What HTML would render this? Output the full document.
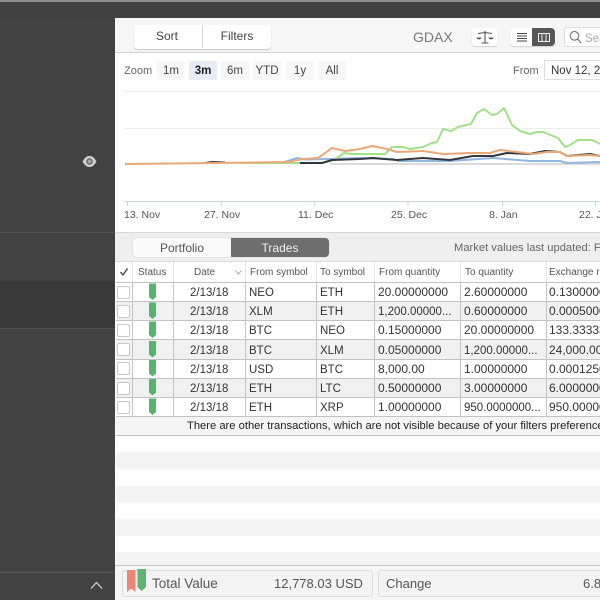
<!DOCTYPE html>
<html><head><meta charset="utf-8">
<style>
html,body{margin:0;padding:0;width:600px;height:600px;overflow:hidden;background:#424242;font-family:"Liberation Sans",sans-serif;color:#333}
div,span{position:absolute;box-sizing:border-box;white-space:nowrap}
#w{left:0;top:0;width:600px;height:600px;overflow:hidden;filter:blur(.3px)}
.t{font-size:11px;line-height:14px;color:#444}
.z{top:61px;height:19px;background:#f7f7f7;font-size:11.5px;line-height:20px;text-align:center;color:#444;border-radius:2px}
.h{top:263px;height:20px;font-size:10px;line-height:20px;color:#555}
.c{font-size:11.5px;line-height:19px;color:#333;margin-top:2px}
.n{font-size:12px;margin-top:1px}
.v{width:1px;background:#c4c4c4}
.hv{top:262px;height:20px;width:1px;background:#e6e6e6}
.r{left:116px;width:484px;height:1px;background:#c2c2c2}
.g{left:116px;width:484px;height:19px;background:#f1f1f1}
.cb{left:117px;width:13px;height:13px;background:#fff;border:1px solid #c8c8c8;border-radius:2px}
.s{stroke-linejoin:round;fill:none}
</style></head><body>
<div id="w">
<div style="left:0;top:0;width:600px;height:2px;background:#8f8f8f"></div>
<div style="left:0;top:2px;width:600px;height:16px;background:#414141"></div>
<div style="left:0;top:232px;width:115px;height:1px;background:#525252"></div>
<div style="left:0;top:281px;width:115px;height:47px;background:#383838"></div>
<div style="left:0;top:328px;width:115px;height:1px;background:#515151"></div>
<div style="left:0;top:572px;width:115px;height:1px;background:#565656"></div>
<svg style="position:absolute;left:82px;top:155px" width="15" height="13" viewBox="0 0 15 13"><path d="M0.500 6.500C3 2.200 5 1 7.500 1S12 2.200 14.500 6.500C12 10.800 10 12 7.500 12S3 10.800 .5 6.500Z" fill="#cfcfcf"/><circle cx="7.500" cy="6.500" r="3.200" fill="#5a5a5a"/><circle cx="7.500" cy="6.500" r="2" fill="#a8a8a8"/></svg>
<svg style="position:absolute;left:90px;top:581px" width="13" height="9" viewBox="0 0 13 9"><path d="M1 7.500L6.500 1.500L12 7.500" fill="none" stroke="#d8d8d8" stroke-width="1.200"/></svg>

<div style="left:115px;top:18px;width:485px;height:582px;background:#fff"></div>
<div style="left:115px;top:18px;width:485px;height:34px;background:#f6f6f6"></div>
<div style="left:115px;top:52px;width:485px;height:1px;background:#d4d4d4"></div>
<div style="left:134px;top:25px;width:137px;height:24px;background:#fff;border-radius:4px;box-shadow:0 1px 1px #c4c4c4"></div>
<div style="left:202px;top:25px;width:1px;height:23px;background:#d6d6d6"></div>
<div style="left:133px;top:26px;width:68px;height:23px;text-align:center;font-size:12px;line-height:21px;color:#444">Sort</div>
<div style="left:203px;top:26px;width:68px;height:23px;text-align:center;font-size:12px;line-height:21px;color:#444">Filters</div>
<div style="left:413px;top:29px;font-size:14px;line-height:17px;color:#777">GDAX</div>
<div style="left:472px;top:28px;width:26px;height:18px;background:#fff;border-radius:3px;box-shadow:0 1px 1px #d0d0d0"></div>
<svg style="position:absolute;left:476px;top:30px" width="18" height="15" viewBox="0 0 18 15"><path d="M9 1V12.500M5.500 13H12.500M2 3.500L9 2.500L16 3.500" fill="none" stroke="#555" stroke-width="1.100"/><path d="M.5 7.500H5.500C5 10 1 10 .5 7.500ZM12.500 7.500H17.500C17 10 13 10 12.500 7.500Z" fill="#555"/></svg>
<div style="left:510px;top:28px;width:46px;height:18px;background:#fff;border-radius:4px;box-shadow:0 1px 1px #d0d0d0"></div>
<div style="left:532px;top:28px;width:23px;height:18px;background:#575757;border-radius:0 4px 4px 0"></div>
<svg style="position:absolute;left:510px;top:28px" width="46" height="18" viewBox="0 0 46 18"><path d="M7 5.500H17M7 8H17M7 10.500H17M7 13H17" stroke="#444" stroke-width="1"/><path d="M28.500 5.500H39.500V13.500H28.500ZM32 5.500V13.500M36 5.500V13.500" fill="none" stroke="#eee" stroke-width="1"/></svg>
<div style="left:564px;top:27px;width:40px;height:20px;background:#fff;border:1px solid #ddd;border-radius:3px"></div>
<svg style="position:absolute;left:569px;top:30px" width="13" height="14" viewBox="0 0 13 14"><circle cx="5.500" cy="5.800" r="4.300" fill="none" stroke="#666" stroke-width="1"/><path d="M8.500 9L12 13" stroke="#666" stroke-width="1.100"/></svg>
<div style="left:585px;top:32px;font-size:11.500px;line-height:14px;color:#aaa">Sea</div>

<div class="t" style="left:124px;top:64px;color:#666">Zoom</div>
<div class="z" style="left:157px;width:28px">1m</div>
<div class="z" style="left:189px;width:28px;background:#e6ebf5;font-weight:bold;color:#222">3m</div>
<div class="z" style="left:221px;width:28px">6m</div>
<div class="z" style="left:253px;width:28px">YTD</div>
<div class="z" style="left:286px;width:28px">1y</div>
<div class="z" style="left:318px;width:28px">All</div>
<div class="t" style="left:513px;top:64px;color:#666">From</div>
<div style="left:544px;top:60px;width:60px;height:20px;border:1px solid #ddd;background:#fff;font-size:11.500px;line-height:20px;padding-left:6px;color:#333">Nov 12, 2</div>

<svg style="position:absolute;left:115px;top:85px" width="485" height="130" viewBox="115 85 485 130">
<path d="M124 91.500H600M124 128.500H600" stroke="#ececec" stroke-width="1"/>
<path d="M124 201.500H600" stroke="#cdd3e0" stroke-width="1"/>
<path d="M127.500 201.500V206M221.500 201.500V206M314.500 201.500V206M408 201.500V206M502.500 201.500V206M595.500 201.500V206" stroke="#cdd3e0" stroke-width="1"/>
<path d="M330 164H600" stroke="#cfcfcf" stroke-width="1.500" fill="none"/>
<path class="s" stroke="#90b7e2" stroke-width="2" d="M280 163L288 161L297 158L306 159.500L328 159L360 158L393 159L398 161L450 161L493 158L530 161L560 161L567 163L600 162"/>
<path class="s" stroke="#a4e08a" stroke-width="2" d="M240 163L310 163L322 163L334 160L344 153L352 154L360 154L385 154L392 147L403 147L410 149L423 147L432 143L437 142L443 129L451 131L458 127L471 124L477 113L484 109L492 115L497 114L504 108L512 125L520 131L530 134L537 132L543 132L553 136L558 138L565 147L570 145L578 140L592 140L600 144"/>
<path class="s" stroke="#33363f" stroke-width="2" d="M205 163L212 162L225 162.500M300 163L322 163L332 160L360 159L373 158L397 160L423 158L450 160L473 156L493 156L507 153L530 154L545 151L560 152L567 156L590 154L600 156"/>
<path class="s" stroke="#eba877" stroke-width="2" d="M125 164L215 163L288 162L302 159L318 158L332 148L345 151L360 149L372 146L387 149L397 152L423 151L443 154L470 153L490 153L500 150L517 152L533 154L547 152L560 152L567 156L590 155L600 156"/>
</svg>
<div class="t" style="left:124px;top:208px;font-size:10.500px;color:#555">13. Nov</div>
<div class="t" style="left:204px;top:208px;font-size:10.500px;color:#555">27. Nov</div>
<div class="t" style="left:298px;top:208px;font-size:10.500px;color:#555">11. Dec</div>
<div class="t" style="left:391px;top:208px;font-size:10.500px;color:#555">25. Dec</div>
<div class="t" style="left:489px;top:208px;font-size:10.500px;color:#555">8. Jan</div>
<div class="t" style="left:579px;top:208px;font-size:10.500px;color:#555">22. J</div>

<div style="left:115px;top:232px;width:485px;height:30px;background:#efefef;border-top:1px solid #d8d8d8;border-bottom:1px solid #dcdcdc"></div>
<div style="left:133px;top:238px;width:196px;height:19px;background:#fafafa;border-radius:4px;box-shadow:0 0 1px #aaa"></div>
<div style="left:231px;top:238px;width:98px;height:19px;background:#6e6e6e;border-radius:0 4px 4px 0"></div>
<div style="left:133px;top:239px;width:98px;height:18px;text-align:center;font-size:12px;line-height:18px;color:#555">Portfolio</div>
<div style="left:231px;top:239px;width:98px;height:18px;text-align:center;font-size:12px;line-height:18px;color:#eee">Trades</div>
<div style="left:454px;top:241px;font-size:11.200px;line-height:15px;color:#666">Market values last updated: F</div>

<div style="left:116px;top:262px;width:484px;height:20px;background:#fff"></div>
<div class="hv" style="left:132px"></div><div class="hv" style="left:173px"></div><div class="hv" style="left:245px"></div><div class="hv" style="left:316px"></div><div class="hv" style="left:374px"></div><div class="hv" style="left:460px"></div><div class="hv" style="left:546px"></div>
<svg style="position:absolute;left:119px;top:267px" width="10" height="10" viewBox="0 0 10 10"><path d="M1.500 5L4 8L8.500 1.500" fill="none" stroke="#333" stroke-width="1.200"/></svg>
<div class="h" style="left:138px">Status</div>
<div class="h" style="left:194px">Date</div>
<svg style="position:absolute;left:235px;top:270px" width="7" height="5" viewBox="0 0 7 5"><path d="M.5 .5L3.500 4L6.500 .5" fill="none" stroke="#999" stroke-width=".8"/></svg>
<div class="h" style="left:250px">From symbol</div>
<div class="h" style="left:320px">To symbol</div>
<div class="h" style="left:379px">From quantity</div>
<div class="h" style="left:465px">To quantity</div>
<div class="h" style="left:549px">Exchange r</div>

<div class="g" style="top:301px"></div><div class="g" style="top:340px"></div><div class="g" style="top:378px"></div><div class="g" style="top:417px;background:#f5f5f5"></div>

<div class="r" style="top:282px"></div><div class="r" style="top:301px"></div><div class="r" style="top:320px"></div><div class="r" style="top:339px"></div><div class="r" style="top:359px"></div><div class="r" style="top:378px"></div><div class="r" style="top:397px"></div><div class="r" style="top:416px"></div><div class="r" style="top:435px"></div>

<div class="v" style="left:132px;top:282px;height:134px"></div><div class="v" style="left:173px;top:282px;height:134px"></div><div class="v" style="left:245px;top:282px;height:134px"></div><div class="v" style="left:316px;top:282px;height:134px"></div><div class="v" style="left:374px;top:282px;height:134px"></div><div class="v" style="left:460px;top:282px;height:134px"></div><div class="v" style="left:546px;top:282px;height:134px"></div>

<div class="cb" style="top:286px"></div><div class="cb" style="top:305px"></div><div class="cb" style="top:324px"></div><div class="cb" style="top:343px"></div><div class="cb" style="top:362px"></div><div class="cb" style="top:382px"></div><div class="cb" style="top:401px"></div>

<svg style="position:absolute;left:148px;top:282px" width="10" height="135" viewBox="0 0 10 135" fill="#58b36f">
<path d="M1 1.500H8V15L4.500 18L1 15Z"/>
<path d="M1 20.500H8V34L4.500 37L1 34Z"/><path d="M1 39.500H8V53L4.500 56L1 53Z"/><path d="M1 59H8V72.500L4.500 75.500L1 72.500Z"/><path d="M1 78H8V91.500L4.500 94.500L1 91.500Z"/><path d="M1 97H8V110.500L4.500 113.500L1 110.500Z"/><path d="M1 116.500H8V130L4.500 133L1 130Z"/>
</svg>

<div class="c" style="left:190px;top:282px">2/13/18</div><div class="c" style="left:249px;top:282px">NEO</div><div class="c" style="left:320px;top:282px">ETH</div><div class="c n" style="left:378px;top:282px">20.00000000</div><div class="c n" style="left:464px;top:282px">2.60000000</div><div class="c n" style="left:549px;top:282px">0.13000000</div>
<div class="c" style="left:190px;top:301px">2/13/18</div><div class="c" style="left:249px;top:301px">XLM</div><div class="c" style="left:320px;top:301px">ETH</div><div class="c" style="left:378px;top:301px">1,200.00000...</div><div class="c n" style="left:464px;top:301px">0.60000000</div><div class="c n" style="left:549px;top:301px">0.00050000</div>
<div class="c" style="left:190px;top:320px">2/13/18</div><div class="c" style="left:249px;top:320px">BTC</div><div class="c" style="left:320px;top:320px">NEO</div><div class="c n" style="left:378px;top:320px">0.15000000</div><div class="c n" style="left:464px;top:320px">20.00000000</div><div class="c n" style="left:549px;top:320px">133.33333</div>
<div class="c" style="left:190px;top:340px">2/13/18</div><div class="c" style="left:249px;top:340px">BTC</div><div class="c" style="left:320px;top:340px">XLM</div><div class="c n" style="left:378px;top:340px">0.05000000</div><div class="c" style="left:464px;top:340px">1,200.00000...</div><div class="c n" style="left:549px;top:340px">24,000.00</div>
<div class="c" style="left:190px;top:359px">2/13/18</div><div class="c" style="left:249px;top:359px">USD</div><div class="c" style="left:320px;top:359px">BTC</div><div class="c n" style="left:378px;top:359px">8,000.00</div><div class="c n" style="left:464px;top:359px">1.00000000</div><div class="c n" style="left:549px;top:359px">0.00012500</div>
<div class="c" style="left:190px;top:378px">2/13/18</div><div class="c" style="left:249px;top:378px">ETH</div><div class="c" style="left:320px;top:378px">LTC</div><div class="c n" style="left:378px;top:378px">0.50000000</div><div class="c n" style="left:464px;top:378px">3.00000000</div><div class="c n" style="left:549px;top:378px">6.00000000</div>
<div class="c" style="left:190px;top:397px">2/13/18</div><div class="c" style="left:249px;top:397px">ETH</div><div class="c" style="left:320px;top:397px">XRP</div><div class="c n" style="left:378px;top:397px">1.00000000</div><div class="c" style="left:464px;top:397px">950.0000000...</div><div class="c n" style="left:549px;top:397px">950.00000</div>
<div class="c" style="left:187px;top:415px;color:#222;font-size:11.200px">There are other transactions, which are not visible because of your filters preference</div>

<div style="left:116px;top:452px;width:484px;height:17px;background:#f3f3f3"></div>
<div style="left:116px;top:486px;width:484px;height:17px;background:#f3f3f3"></div>
<div style="left:116px;top:519px;width:484px;height:17px;background:#f3f3f3"></div>
<div style="left:116px;top:552px;width:484px;height:13px;background:#f3f3f3"></div>
<div style="left:115px;top:565px;width:485px;height:35px;background:#f5f5f5;border-top:1px solid #c9c9c9"></div>
<div style="left:122px;top:570px;width:251px;height:27px;background:#f3f3f3;border:1px solid #dcdcdc;border-radius:3px"></div>
<div style="left:378px;top:570px;width:230px;height:27px;background:#f3f3f3;border:1px solid #dcdcdc;border-radius:3px"></div>
<svg style="position:absolute;left:126px;top:569px" width="22" height="24" viewBox="0 0 22 24"><path d="M1 1H9.500V23L5.200 19.500L1 23Z" fill="#ea8672"/><path d="M11.500 0H20V18L15.700 22L11.500 18Z" fill="#5fb274"/></svg>
<div style="left:152px;top:575px;font-size:13.500px;line-height:18px;color:#555">Total Value</div>
<div style="left:274px;top:575px;font-size:13px;line-height:18px;color:#555">12,778.03 USD</div>
<div style="left:386px;top:575px;font-size:13px;line-height:18px;color:#555">Change</div>
<div style="left:583px;top:575px;font-size:13px;line-height:18px;color:#555">6.8</div>
</div>
</body></html>
